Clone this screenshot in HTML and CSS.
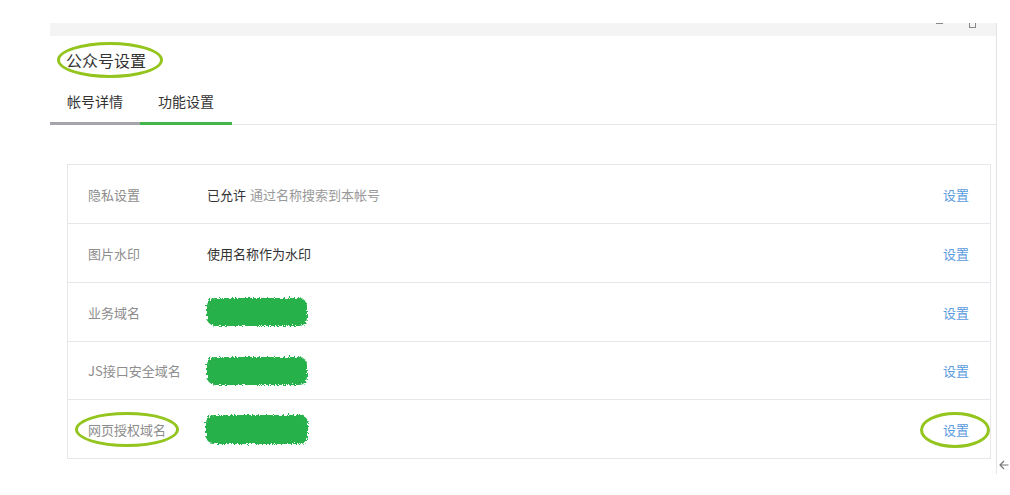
FILE: index.html
```html
<!DOCTYPE html>
<html lang="zh-CN">
<head>
    <meta charset="UTF-8">
    <title>公众号设置</title>
    <link rel="stylesheet" href="styles.css">
</head>
<body>

<div class="page">
    <div class="window">
        <div class="titlebar">
            <span class="ctrl-min"></span>
            <span class="ctrl-max"></span>
        </div>
        <div class="title"><span class="mark mark-title">公众号设置</span></div>
        <div class="tabs">
            <div class="tab">帐号详情</div>
            <div class="tab active">功能设置</div>
            <div class="tab-fill"></div>
        </div>

        <div class="settings">
            <div class="row">
                <div class="label">隐私设置</div>
                <div class="value"><span class="strong">已允许</span> <span class="muted">通过名称搜索到本帐号</span></div>
                <a class="link">设置</a>
            </div>
            <div class="row">
                <div class="label">图片水印</div>
                <div class="value"><span class="strong">使用名称作为水印</span></div>
                <a class="link">设置</a>
            </div>
            <div class="row">
                <div class="label">业务域名</div>
                <div class="value"><span class="scribble"></span></div>
                <a class="link">设置</a>
            </div>
            <div class="row">
                <div class="label">JS接口安全域名</div>
                <div class="value"><span class="scribble"></span></div>
                <a class="link">设置</a>
            </div>
            <div class="row">
                <div class="label"><span class="mark mark-label">网页授权域名</span></div>
                <div class="value"><span class="scribble"></span></div>
                <a class="link"><span class="mark mark-link">设置</span></a>
            </div>
        </div>
    </div>
    <div class="side">
        <svg class="back" width="10" height="10" viewBox="0 0 10 10">
            <path d="M9.5 5H1M5 1L1 5l4 4" fill="none" stroke="#777" stroke-width="1.2"/>
        </svg>
    </div>
</div>

<svg class="defs" width="0" height="0">
    <filter id="rough">
        <feTurbulence type="fractalNoise" baseFrequency="0.6" numOctaves="2" result="noise"/>
        <feDisplacementMap in="SourceGraphic" in2="noise" scale="6"/>
    </filter>
</svg>

</body>
</html>
```

FILE: styles.css
```css
body {
    margin: 0;
    background: #fff;
    font-family: "Microsoft YaHei", "Noto Sans CJK SC", sans-serif;
    color: #333;
}
.page {
    display: flex;
    padding: 23px 0 0 50px;
}
.window {
    width: 947px;
    height: 451px;
    border-right: 1px solid #e4e4e6;
    box-sizing: border-box;
}
.titlebar {
    height: 13px;
    background: #f4f4f4;
    display: flex;
    justify-content: flex-end;
    align-items: flex-start;
    overflow: hidden;
    padding-right: 20px;
}
.ctrl-min {
    width: 7px;
    height: 1px;
    background: #888;
    margin-right: 26px;
}
.ctrl-max {
    width: 5px;
    height: 8px;
    border: 1px solid #888;
    margin-top: -5px;
}
/* 標題 */
.title {
    padding: 12px 0 0 16px;
    font-size: 16px;
    line-height: 24px;
    height: 24px;
}
.mark {
    position: relative;
}
.mark::after {
    content: "";
    position: absolute;
    border: 3px solid #93c51e;
    border-radius: 50%;
}
.mark-title::after { left: -9px; right: -17px; top: -6px; bottom: -6px; }
.mark-label::after { left: -13px; right: -13px; top: -8px; bottom: -8px; }
.mark-link::after { left: -23px; right: -21px; top: -8px; bottom: -9px; }
/* 分頁 */
.tabs {
    display: flex;
    font-size: 14px;
    line-height: 20px;
}
.tab {
    padding: 19px 0 11px 17px;
    width: 73px;
    border-bottom: 3px solid #a3a5ab;
}
.tab.active {
    width: 74px;
    padding-left: 18px;
    border-bottom-color: #44b549;
}
.tab-fill {
    flex: 1;
    align-self: flex-end;
    border-bottom: 1px solid #e7e7eb;
}
/* 設定表格 */
.settings {
    margin: 39px 5px 0 17px;
    border: 1px solid #e7e7eb;
    border-bottom: none;
    font-size: 13px;
}
.row {
    display: flex;
    align-items: center;
    height: 58px;
    border-bottom: 1px solid #e7e7eb;
}
.row:nth-child(4) { height: 57px; }
.label {
    width: 119px;
    padding-left: 20px;
    color: #8d8d8d;
    white-space: nowrap;
}
.value {
    flex: 1;
    display: flex;
    align-items: center;
    gap: 4px;
}
.strong { color: #333; }
.muted { color: #999; }
.link {
    color: #5b9be0;
    margin-right: 21px;
    cursor: pointer;
}
.scribble {
    display: inline-block;
    width: 100px;
    height: 28px;
    background: #26b14b;
    border-radius: 8px;
    filter: url(#rough);
}
.row:nth-child(5) .scribble { width: 102px; height: 29px; margin-left: -1px; }
.side {
    display: flex;
    align-items: flex-end;
    padding: 0 0 4px 2px;
}
.back { display: block; }
.defs { position: absolute; }
```
